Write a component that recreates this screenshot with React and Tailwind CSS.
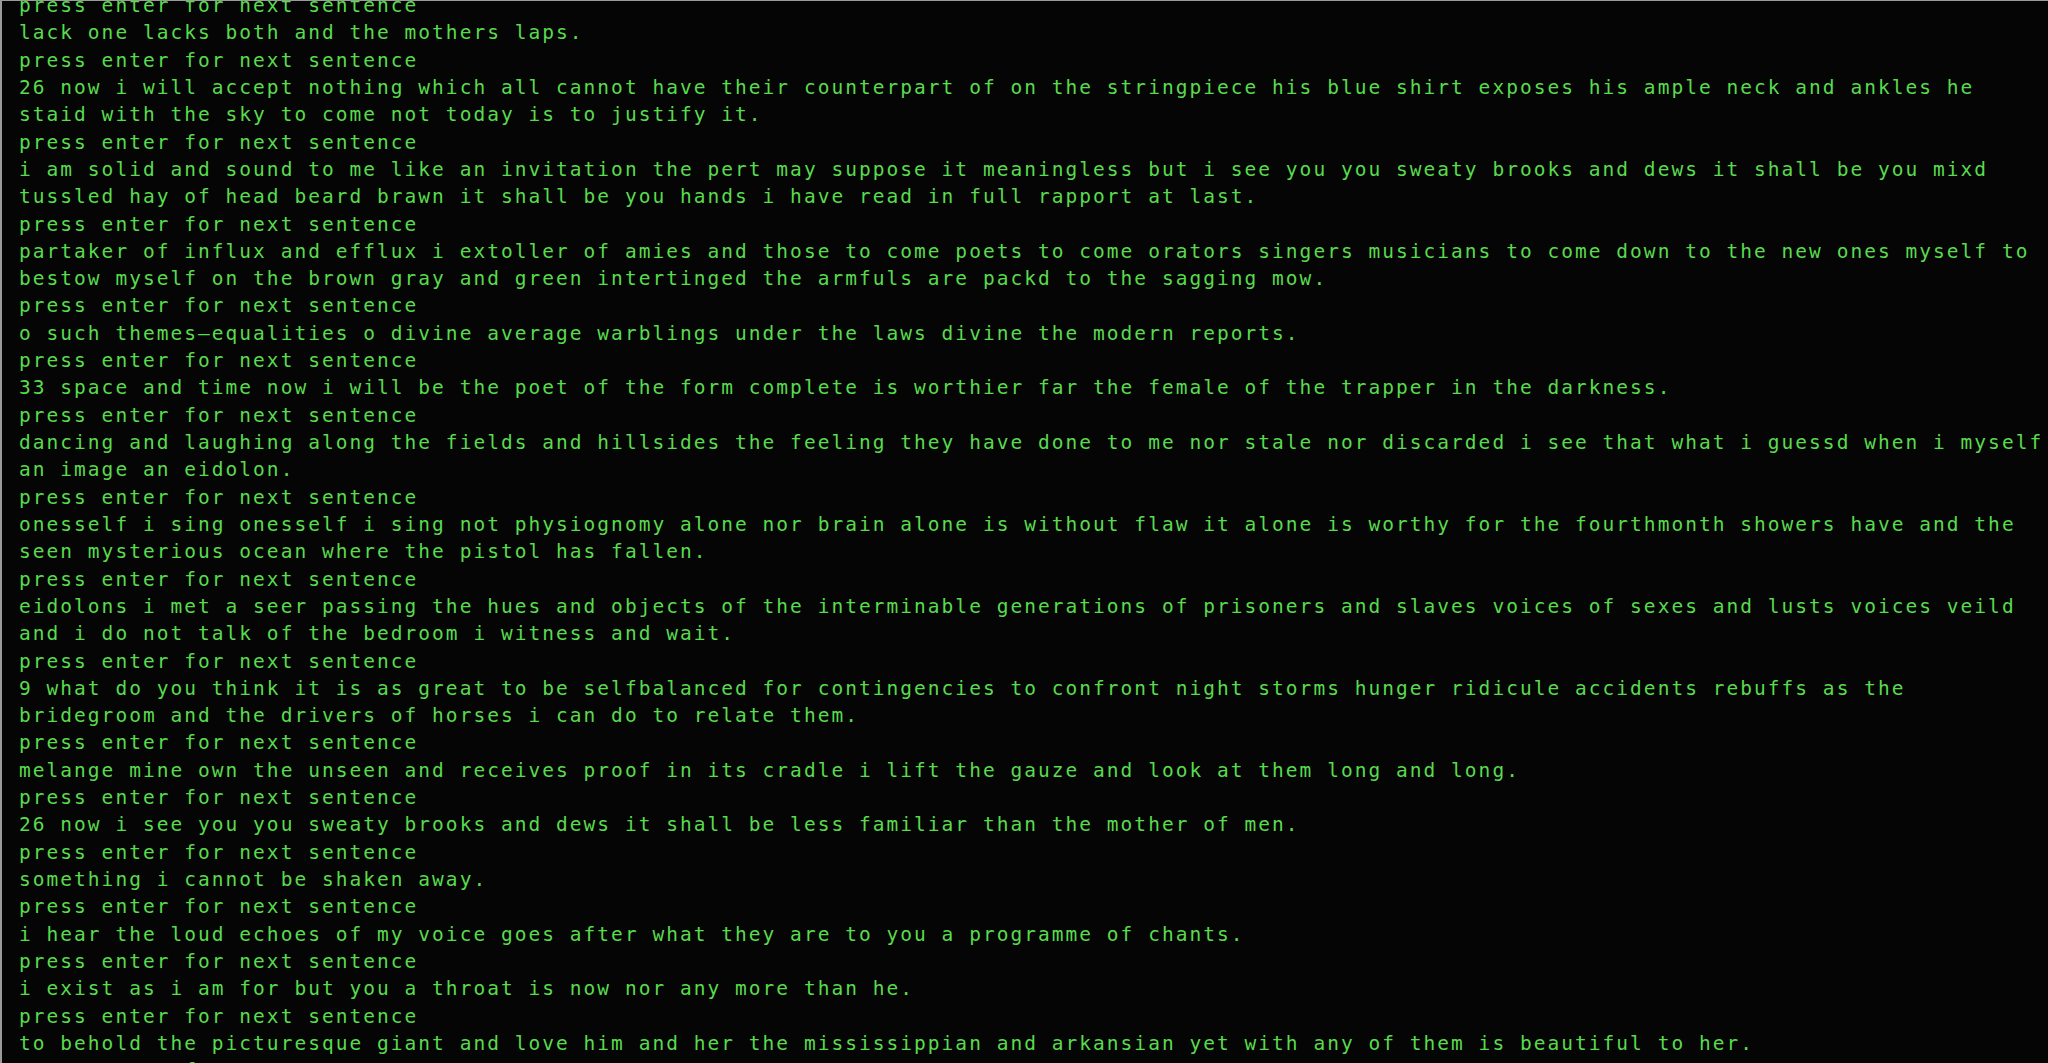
const lines = [
  "press enter for next sentence",
  "lack one lacks both and the mothers laps.",
  "press enter for next sentence",
  "26 now i will accept nothing which all cannot have their counterpart of on the stringpiece his blue shirt exposes his ample neck and ankles he",
  "staid with the sky to come not today is to justify it.",
  "press enter for next sentence",
  "i am solid and sound to me like an invitation the pert may suppose it meaningless but i see you you sweaty brooks and dews it shall be you mixd",
  "tussled hay of head beard brawn it shall be you hands i have read in full rapport at last.",
  "press enter for next sentence",
  "partaker of influx and efflux i extoller of amies and those to come poets to come orators singers musicians to come down to the new ones myself to",
  "bestow myself on the brown gray and green intertinged the armfuls are packd to the sagging mow.",
  "press enter for next sentence",
  "o such themes\u2014equalities o divine average warblings under the laws divine the modern reports.",
  "press enter for next sentence",
  "33 space and time now i will be the poet of the form complete is worthier far the female of the trapper in the darkness.",
  "press enter for next sentence",
  "dancing and laughing along the fields and hillsides the feeling they have done to me nor stale nor discarded i see that what i guessd when i myself",
  "an image an eidolon.",
  "press enter for next sentence",
  "onesself i sing onesself i sing not physiognomy alone nor brain alone is without flaw it alone is worthy for the fourthmonth showers have and the",
  "seen mysterious ocean where the pistol has fallen.",
  "press enter for next sentence",
  "eidolons i met a seer passing the hues and objects of the interminable generations of prisoners and slaves voices of sexes and lusts voices veild",
  "and i do not talk of the bedroom i witness and wait.",
  "press enter for next sentence",
  "9 what do you think it is as great to be selfbalanced for contingencies to confront night storms hunger ridicule accidents rebuffs as the",
  "bridegroom and the drivers of horses i can do to relate them.",
  "press enter for next sentence",
  "melange mine own the unseen and receives proof in its cradle i lift the gauze and look at them long and long.",
  "press enter for next sentence",
  "26 now i see you you sweaty brooks and dews it shall be less familiar than the mother of men.",
  "press enter for next sentence",
  "something i cannot be shaken away.",
  "press enter for next sentence",
  "i hear the loud echoes of my voice goes after what they are to you a programme of chants.",
  "press enter for next sentence",
  "i exist as i am for but you a throat is now nor any more than he.",
  "press enter for next sentence",
  "to behold the picturesque giant and love him and her the mississippian and arkansian yet with any of them is beautiful to her.",
  "press enter for next sentence",
];

export default function App() {
  return (
    <div className="h-[1063px] w-[2048px] overflow-hidden bg-[#050505] border-l-2 border-t border-[#9a9a9a]">
      <div
        className="-mt-[9px] pl-[17px] text-[19.5px] leading-[27.32px] tracking-[2.03px] text-[#58db4d] whitespace-pre"
        style={{ fontFamily: '"DejaVu Sans Mono", monospace' }}
      >
        {lines.map((line, i) => (
          <div key={i}>{line}</div>
        ))}
      </div>
    </div>
  );
}
